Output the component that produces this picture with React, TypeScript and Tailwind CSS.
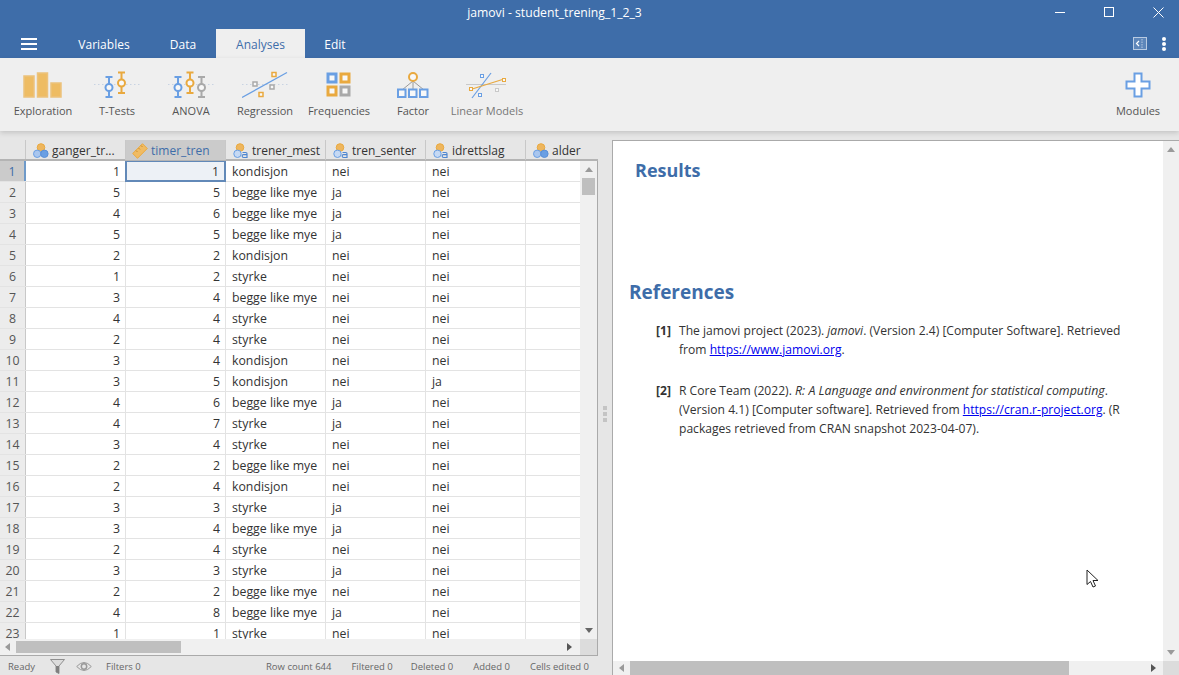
import { Fragment } from 'react';

const rows: [number, number, string, string, string][] = [
  [1, 1, 'kondisjon', 'nei', 'nei'],
  [5, 5, 'begge like mye', 'ja', 'nei'],
  [4, 6, 'begge like mye', 'ja', 'nei'],
  [5, 5, 'begge like mye', 'ja', 'nei'],
  [2, 2, 'kondisjon', 'nei', 'nei'],
  [1, 2, 'styrke', 'nei', 'nei'],
  [3, 4, 'begge like mye', 'nei', 'nei'],
  [4, 4, 'styrke', 'nei', 'nei'],
  [2, 4, 'styrke', 'nei', 'nei'],
  [3, 4, 'kondisjon', 'nei', 'nei'],
  [3, 5, 'kondisjon', 'nei', 'ja'],
  [4, 6, 'begge like mye', 'ja', 'nei'],
  [4, 7, 'styrke', 'ja', 'nei'],
  [3, 4, 'styrke', 'nei', 'nei'],
  [2, 2, 'begge like mye', 'nei', 'nei'],
  [2, 4, 'kondisjon', 'nei', 'nei'],
  [3, 3, 'styrke', 'ja', 'nei'],
  [3, 4, 'begge like mye', 'ja', 'nei'],
  [2, 4, 'styrke', 'nei', 'nei'],
  [3, 3, 'styrke', 'ja', 'nei'],
  [2, 2, 'begge like mye', 'nei', 'nei'],
  [4, 8, 'begge like mye', 'ja', 'nei'],
  [1, 1, 'styrke', 'nei', 'nei'],
];

const BLUE = '#6a9fe3';
const ORANGE = '#e9a93f';
const GRAY = '#a9a9a9';

function Nominal() {
  return (
    <svg width="16" height="16" viewBox="0 0 16 16" className="shrink-0">
      <circle cx="8" cy="4.5" r="3.8" fill="#eeb65e" stroke={ORANGE} />
      <circle cx="4.2" cy="10.8" r="3.7" fill="#a9c6ee" stroke={BLUE} />
      <circle cx="11.4" cy="10.8" r="3.7" fill={BLUE} stroke="#5b8fd6" />
    </svg>
  );
}

function Ordinal() {
  return (
    <svg width="16" height="16" viewBox="0 0 16 16" className="shrink-0">
      <circle cx="7" cy="4.5" r="3.8" fill="#eeb65e" stroke={ORANGE} />
      <circle cx="4.5" cy="10.8" r="3.7" fill="#c6d9f3" stroke={BLUE} />
      <path d="M9.5 9.5h3.2q1.3 0 1.3 1.3v3.7h-3.4q-1.4 0-1.4-1.5t1.4-1.4h3.4" fill="none" stroke="#4f86d0" strokeWidth="1.2" />
    </svg>
  );
}

function Ruler() {
  return (
    <svg width="16" height="16" viewBox="0 0 16 16" className="shrink-0 -ml-px">
      <path d="M.7 10.5 10.5.7 15.3 5.5 5.5 15.3Z" fill="#f0bb63" stroke={ORANGE} />
      <path d="M4 7.5l1.5 1.5M6.5 5l1.5 1.5M9 2.5l1.5 1.5" stroke="#c98e2c" strokeWidth="1" />
    </svg>
  );
}

function Pin({ x, top, bottom, cy, color }: { x: number; top: number; bottom: number; cy: number; color: string }) {
  return (
    <g stroke={color} fill="none" strokeWidth="2">
      <path d={`M${x} ${top}V${bottom}M${x - 3.5} ${top}h7M${x - 3.5} ${bottom}h7`} />
      <circle cx={x} cy={cy} r="3.5" fill="#f8f8f8" />
    </g>
  );
}

function Exploration() {
  return (
    <svg width="40" height="26" viewBox="0 0 40 26">
      <g fill="#eebc63" stroke="#ecc27c" strokeWidth="1.5">
        <rect x="1" y="4" width="10" height="21" />
        <rect x="14.5" y="1" width="10" height="24" />
        <rect x="28" y="11" width="10" height="14" />
      </g>
    </svg>
  );
}

function TTests() {
  return (
    <svg width="46" height="28" viewBox="0 0 46 28">
      <path d="M0 13.5H46" stroke="#c8d3e2" strokeDasharray="1.5 2.5" />
      <Pin x={15} top={6} bottom={26} cy={16.5} color={BLUE} />
      <Pin x={27.5} top={1.5} bottom={22} cy={12} color={ORANGE} />
    </svg>
  );
}

function Anova() {
  return (
    <svg width="46" height="28" viewBox="0 0 46 28">
      <path d="M0 13.5H46" stroke="#c8d3e2" strokeDasharray="1.5 2.5" />
      <Pin x={10} top={6} bottom={26} cy={16.5} color={BLUE} />
      <Pin x={22} top={1.5} bottom={22} cy={12} color={ORANGE} />
      <Pin x={33.5} top={6} bottom={26} cy={16.5} color={GRAY} />
    </svg>
  );
}

function Regression() {
  return (
    <svg width="46" height="28" viewBox="0 0 46 28">
      <path d="M0 13.5H46" stroke="#c8d3e2" strokeDasharray="1.5 2.5" />
      <path d="M0 26.5 45 1.5" stroke={BLUE} strokeWidth="1.3" />
      <g fill="#f8f8f8" strokeWidth="1.5">
        <rect x="30" y="1.5" width="4" height="4" stroke={ORANGE} />
        <rect x="11" y="11" width="4" height="4" stroke={GRAY} />
        <rect x="28" y="14" width="4" height="4" stroke={GRAY} />
        <rect x="17" y="21.5" width="4" height="4" stroke={ORANGE} />
      </g>
    </svg>
  );
}

function Frequencies() {
  return (
    <svg width="26" height="26" viewBox="0 0 26 26">
      <g fill="#f8f8f8" strokeWidth="3">
        <rect x="2" y="2" width="8" height="8" stroke={BLUE} />
        <rect x="15" y="2" width="8" height="8" stroke={ORANGE} />
        <rect x="2" y="15" width="8" height="8" stroke={ORANGE} />
        <rect x="15" y="15" width="8" height="8" stroke={GRAY} />
      </g>
    </svg>
  );
}

function Factor() {
  return (
    <svg width="32" height="26" viewBox="0 0 32 26">
      <path d="M16 9 5 18M16 9V18M16 9 27 18" stroke="#9a9a9a" fill="none" />
      <circle cx="16" cy="5" r="4" fill="#f8f8f8" stroke={ORANGE} strokeWidth="2" />
      <g fill="#f8f8f8" stroke={BLUE} strokeWidth="2">
        <rect x="1" y="17.5" width="7.5" height="7.5" />
        <rect x="12" y="17.5" width="7.5" height="7.5" />
        <rect x="23" y="17.5" width="7.5" height="7.5" />
      </g>
    </svg>
  );
}

function LinearModels() {
  return (
    <svg width="42" height="27" viewBox="0 0 42 27">
      <path d="M0 12.5H40" stroke="#c9c9c9" />
      <path d="M6 26 25 1" stroke={BLUE} strokeWidth="1.2" />
      <path d="M3 18 38 7" stroke={ORANGE} strokeWidth="1.2" />
      <g fill="#f8f8f8" strokeWidth="1">
        <rect x="14.5" y="2.5" width="3" height="3" stroke={BLUE} />
        <rect x="36.5" y="6.5" width="3" height="3" stroke={ORANGE} />
        <rect x="3.5" y="15.5" width="3" height="3" stroke={ORANGE} />
        <rect x="29.5" y="16.5" width="3" height="3" stroke="#c9c9c9" />
        <rect x="12.5" y="21.5" width="3" height="3" stroke={BLUE} />
      </g>
    </svg>
  );
}

function Modules() {
  return (
    <svg width="26" height="26" viewBox="0 0 26 26">
      <path d="M9.5 1.5h7v8h8v7h-8v8h-7v-8h-8v-7h8Z" fill="#fff" stroke={BLUE} strokeWidth="2" />
    </svg>
  );
}

function RibbonItem({ label, icon, muted }: { label: string; icon: React.ReactNode; muted?: boolean }) {
  return (
    <div className="flex flex-col items-center w-[74px] shrink-0">
      <div className="h-[32px] flex items-center justify-center">{icon}</div>
      <div className={`mt-[2px] text-[11px] leading-[16px] whitespace-nowrap ${muted ? 'text-[#777]' : 'text-[#555]'}`}>{label}</div>
    </div>
  );
}

function Header({ icon, label, active }: { icon: React.ReactNode; label: string; active?: boolean }) {
  return (
    <div className={`w-[100px] shrink-0 h-[20px] flex items-center gap-[3px] pl-[7px] pt-px border-r border-[#c8c8c8] text-[12px] overflow-hidden whitespace-nowrap ${active ? 'bg-[#cbcbcb] text-[#3e6da9]' : 'text-[#333]'}`}>
      {icon}
      <span>{label}</span>
    </div>
  );
}

function Triangle({ dir, color = '#9a9a9a' }: { dir: 'up' | 'down' | 'left' | 'right'; color?: string }) {
  const pts = { up: '0,6 4,1 8,6', down: '0,1 8,1 4,6', left: '6,0 6,8 1,4', right: '1,0 1,8 6,4' }[dir];
  return (
    <svg width="8" height="8" viewBox="0 0 8 8">
      <polygon points={pts} fill={color} />
    </svg>
  );
}

export default function App() {
  return (
    <div className="w-[1179px] h-[675px] overflow-hidden flex flex-col bg-[#e6e6e6] text-[#333] font-['Open_Sans','Noto_Sans',sans-serif]">
      {/* title bar + tabs */}
      <div className="h-[58px] shrink-0 bg-[#3e6da9] text-white relative">
        <div className="h-[29px] flex items-center justify-center pr-[70px] pb-[2px] text-[12.2px]">jamovi - student_trening_1_2_3</div>
        <div className="absolute right-0 top-0 h-[24px] flex items-center gap-[39px] pr-[15px]">
          <div className="w-[10px] h-px bg-white" />
          <div className="w-[10px] h-[10px] border border-white" />
          <svg width="11" height="11" viewBox="0 0 11 11"><path d="M.5.5l10 10M10.5.5l-10 10" stroke="#fff" /></svg>
        </div>
        <div className="h-[29px] flex items-stretch text-[12px]">
          <div className="w-[58px] flex flex-col gap-[3px] items-center justify-center">
            <div className="w-[16px] h-[2px] bg-white" />
            <div className="w-[16px] h-[2px] bg-white" />
            <div className="w-[16px] h-[2px] bg-white" />
          </div>
          <div className="w-[92px] flex items-center justify-center pt-[3px]">Variables</div>
          <div className="w-[66px] flex items-center justify-center pt-[3px]">Data</div>
          <div className="w-[89px] flex items-center justify-center pt-[3px] bg-[#efefef] text-[#3e6da9]">Analyses</div>
          <div className="w-[60px] flex items-center justify-center pt-[3px]">Edit</div>
          <div className="flex-1 flex items-center justify-end gap-[15px] pr-[13px]">
            <svg width="14" height="13" viewBox="0 0 14 13">
              <rect x=".5" y=".5" width="13" height="12" fill="#5d86ba" stroke="#b9cbe2" />
              <path d="M6 4 3.5 6.5 6 9" stroke="#fff" fill="none" strokeWidth="1.2" />
              <path d="M9 2v9" stroke="#b9cbe2" strokeDasharray="1.5 1" />
            </svg>
            <div className="flex flex-col gap-[1px]">
              <div className="w-[4px] h-[4px] rounded-full bg-white" />
              <div className="w-[4px] h-[4px] rounded-full bg-white" />
              <div className="w-[4px] h-[4px] rounded-full bg-white" />
            </div>
          </div>
        </div>
      </div>

      {/* ribbon */}
      <div className="h-[73px] shrink-0 bg-[#efefef] flex items-start pt-[11px] pl-[6px] pr-[4px] shadow-[0_2px_5px_rgba(0,0,0,0.15)] relative z-10">
        <RibbonItem label="Exploration" icon={<Exploration />} />
        <RibbonItem label="T-Tests" icon={<TTests />} />
        <RibbonItem label="ANOVA" icon={<Anova />} />
        <RibbonItem label="Regression" icon={<Regression />} />
        <RibbonItem label="Frequencies" icon={<Frequencies />} />
        <RibbonItem label="Factor" icon={<Factor />} />
        <RibbonItem label="Linear Models" icon={<LinearModels />} muted />
        <div className="flex-1" />
        <RibbonItem label="Modules" icon={<Modules />} />
      </div>

      {/* main */}
      <div className="flex-1 flex min-h-0 pt-[9px]">
        {/* data pane */}
        <div className="w-[598px] shrink-0 flex flex-col">
          <div className="flex-1 min-h-0 flex flex-col">
            <div className="h-[21px] shrink-0 flex border-b-2 border-[#b4b4b4]">
              <div className="w-[26px] shrink-0 border-r border-[#c8c8c8]" />
              <Header icon={<Nominal />} label="ganger_tr..." />
              <Header icon={<Ruler />} label="timer_tren" active />
              <Header icon={<Ordinal />} label="trener_mest" />
              <Header icon={<Ordinal />} label="tren_senter" />
              <Header icon={<Ordinal />} label="idrettslag" />
              <div className="flex-1 min-w-0 h-[20px] flex items-center gap-[3px] pl-[7px] pt-px text-[12px] overflow-hidden whitespace-nowrap">
                <Nominal />
                <span>alder</span>
              </div>
            </div>
            <div className="flex-1 min-h-0 flex border-r border-[#aaa]">
              <div className="flex-1 min-w-0 overflow-hidden bg-white text-[12.3px]">
                {rows.map((r, i) => (
                  <div key={i} className="h-[21px] flex box-border border-b border-[#e3e3e3]">
                    <div className={`w-[26px] shrink-0 text-center leading-[22px] border-r ${i === 0 ? 'bg-[#cbcbcb] text-[#3e6da9] border-[#6f9ac9] border-r-2' : 'bg-[#ececec] text-[#555] border-[#c8c8c8]'}`}>{i + 1}</div>
                    <div className="w-[100px] shrink-0 text-right pr-[5px] leading-[22px] border-r border-[#e3e3e3]">{r[0]}</div>
                    {i === 0 ? (
                      <div className="w-[101px] shrink-0 h-[22px] -mt-px text-right pr-[5px] leading-[20px] bg-[#edf1f6] border-2 border-[#6289b8] -ml-px">{r[1]}</div>
                    ) : (
                      <div className="w-[100px] shrink-0 text-right pr-[5px] leading-[22px] border-r border-[#e3e3e3]">{r[1]}</div>
                    )}
                    <div className="w-[100px] shrink-0 pl-[6px] leading-[22px] border-r border-[#e3e3e3] whitespace-nowrap">{r[2]}</div>
                    <div className="w-[100px] shrink-0 pl-[6px] leading-[22px] border-r border-[#e3e3e3]">{r[3]}</div>
                    <div className="w-[100px] shrink-0 pl-[6px] leading-[22px] border-r border-[#e3e3e3]">{r[4]}</div>
                    <div className="flex-1" />
                  </div>
                ))}
              </div>
              {/* vertical scrollbar */}
              <div className="w-[17px] shrink-0 bg-[#f0f0f0] flex flex-col items-center relative">
                <div className="h-[17px] flex items-center justify-center"><Triangle dir="up" /></div>
                <div className="w-[13px] h-[17px] bg-[#bfbfbf]" />
                <div className="flex-1" />
                <div className="h-[17px] flex items-center justify-center"><Triangle dir="down" color="#666" /></div>
              </div>
            </div>
            {/* horizontal scrollbar */}
            <div className="h-[17px] shrink-0 flex items-stretch bg-[#f0f0f0] border-r border-b border-[#aaa]">
              <div className="w-[16px] flex items-center justify-center"><Triangle dir="left" /></div>
              <div className="w-[165px] my-[2px] bg-[#bfbfbf]" />
              <div className="flex-1 flex items-center justify-end pr-[6px]"><Triangle dir="right" color="#555" /></div>
              <div className="w-[17px] bg-[#dcdcdc]" />
            </div>
          </div>
          {/* status bar */}
          <div className="h-[19px] shrink-0 flex items-center pt-[4px] text-[9.5px] text-[#666]">
            <span className="ml-[8px] w-[42px]">Ready</span>
            <svg width="15" height="15" viewBox="0 0 15 15" className="-mt-[3px]">
              <path d="M.5.5h14L9 7v7.5L6 13V7Z" fill="#dcdcdc" stroke="#8f8f8f" />
              <path d="M6 7h3v7.5L6 13Z" fill="#7f7f7f" />
            </svg>
            <svg width="16" height="11" viewBox="0 0 16 11" className="ml-[11px] -mt-[2px]">
              <path d="M.7 5.5q7.3-8 14.6 0-7.3 8-14.6 0Z" fill="none" stroke="#999" />
              <circle cx="8" cy="5.5" r="2.7" fill="none" stroke="#999" strokeWidth="1.5" />
            </svg>
            <span className="ml-[14px]">Filters 0</span>
            <div className="flex-1" />
            <span className="mr-[20px]">Row count 644</span>
            <span className="mr-[18px]">Filtered 0</span>
            <span className="mr-[20px]">Deleted 0</span>
            <span className="mr-[20px]">Added 0</span>
            <span className="mr-[9px]">Cells edited 0</span>
          </div>
        </div>

        {/* splitter */}
        <div className="w-[14px] shrink-0 flex flex-col items-center justify-center gap-[2px] pt-[13px]">
          {[0, 1, 2].map(n => (
            <Fragment key={n}>
              <div className="w-[4px] h-[4px] bg-[#c4c4c4]" />
            </Fragment>
          ))}
        </div>

        {/* results pane */}
        <div className="flex-1 min-w-0 flex flex-col border-l border-t border-[#aaa] bg-white">
          <div className="flex-1 min-h-0 flex">
            <div className="flex-1 min-w-0">
              <h1 className="mt-[17px] ml-[22px] text-[18px] leading-[24px] font-bold text-[#3e6da9]">Results</h1>
              <h1 className="mt-[96px] ml-[16px] text-[19px] leading-[28px] font-bold text-[#3e6da9]">References</h1>
              <div className="mt-[15px] ml-[43px] w-[468px] flex gap-[7px] text-[12.1px] leading-[19px] text-[#333]">
                <b className="w-[16px] shrink-0">[1]</b>
                <p>The jamovi project (2023). <i>jamovi</i>. (Version 2.4) [Computer Software]. Retrieved from <span className="underline text-[#0000ee]">https://www.jamovi.org</span>.</p>
              </div>
              <div className="mt-[22px] ml-[43px] w-[468px] flex gap-[7px] text-[12.1px] leading-[19px] text-[#333]">
                <b className="w-[16px] shrink-0">[2]</b>
                <p>R Core Team (2022). <i className="text-[12.4px]">R: A Language and environment for statistical computing</i>. (Version 4.1) [Computer software]. Retrieved from <span className="underline text-[#0000ee]">https://cran.r-project.org</span>. (R packages retrieved from CRAN snapshot 2023-04-07).</p>
              </div>
              {/* mouse pointer from the capture */}
              <svg width="14" height="20" viewBox="0 0 14 20" className="absolute left-[1086px] top-[569px]">
                <path d="M1 1V15.5L4.5 12.5L7 18L9.5 17L7 11.5H12Z" fill="#fff" stroke="#222" />
              </svg>
            </div>
            <div className="w-[16px] shrink-0 bg-[#f0f0f0] flex flex-col items-center">
              <div className="h-[17px] flex items-center justify-center"><Triangle dir="up" /></div>
              <div className="flex-1" />
              <div className="h-[17px] flex items-center justify-center"><Triangle dir="down" /></div>
            </div>
          </div>
          <div className="h-[14px] shrink-0 flex items-stretch bg-[#f0f0f0]">
            <div className="w-[17px] flex items-center justify-center"><Triangle dir="left" /></div>
            <div className="w-[439px] bg-[#bfbfbf]" />
            <div className="flex-1 flex items-center justify-end pr-[5px]"><Triangle dir="right" color="#555" /></div>
            <div className="w-[16px] bg-[#dcdcdc]" />
          </div>
        </div>
      </div>
    </div>
  );
}
